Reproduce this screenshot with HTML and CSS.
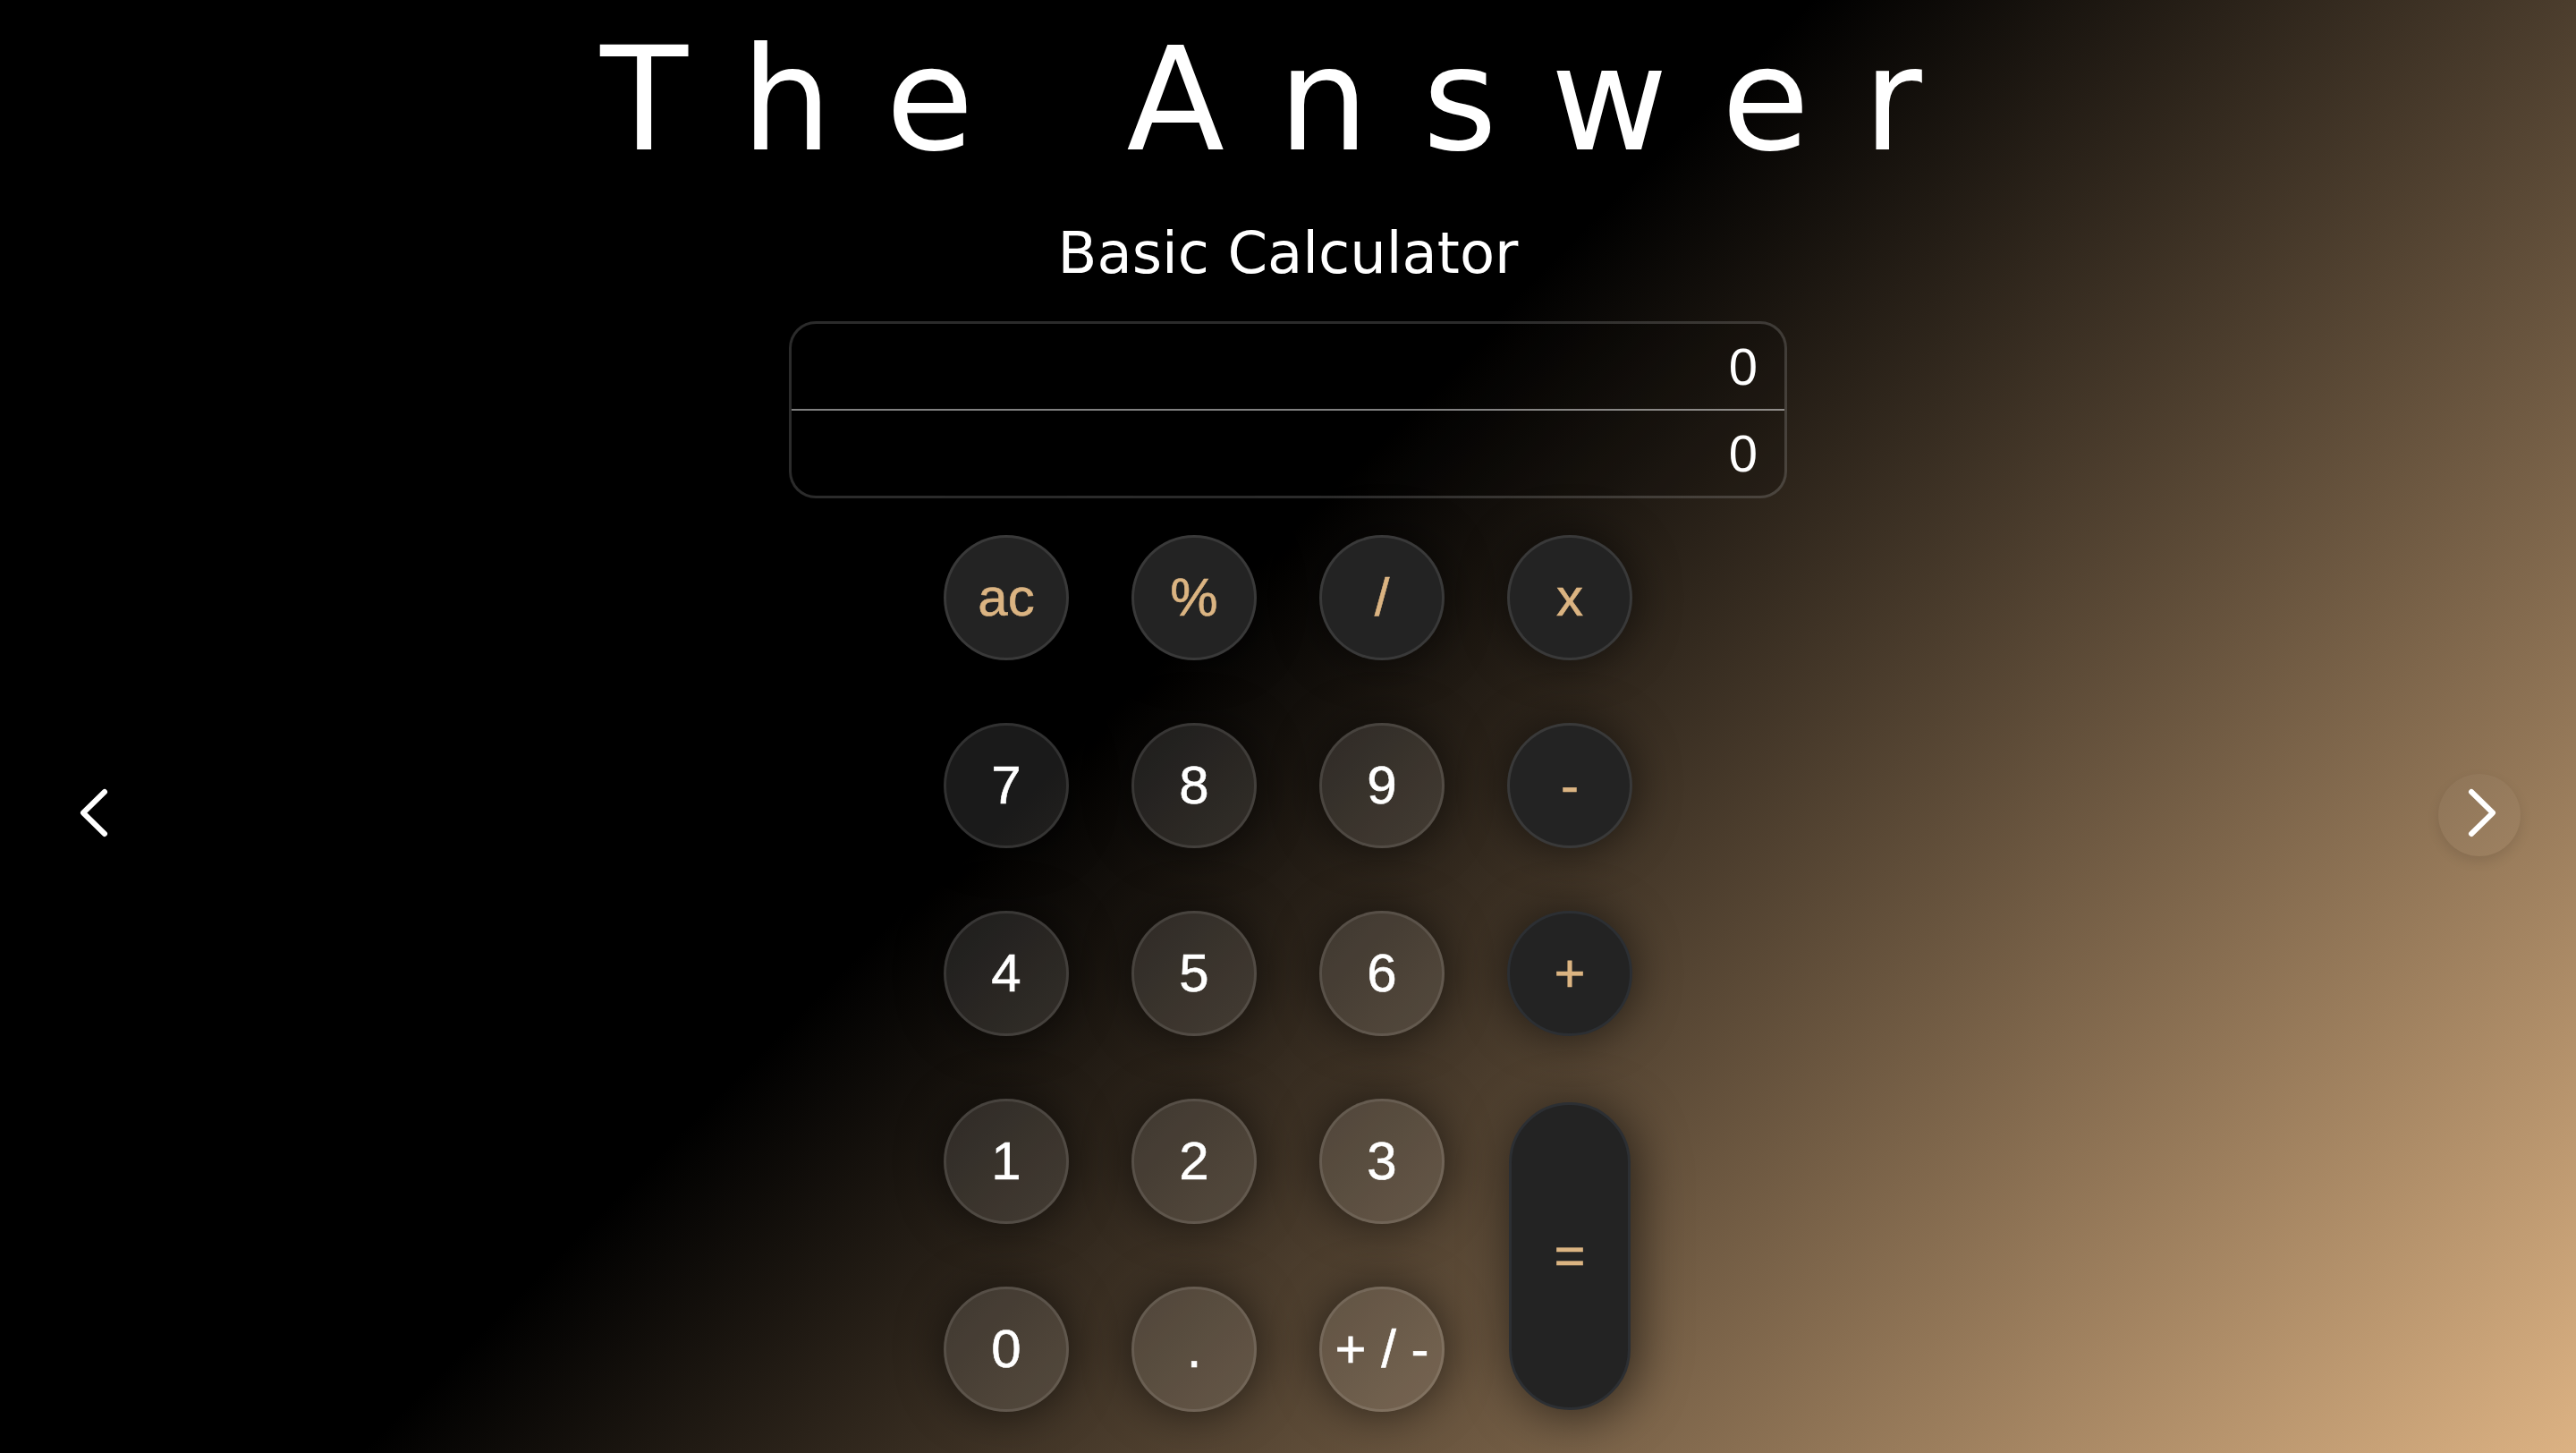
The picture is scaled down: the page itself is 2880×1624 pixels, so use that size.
FILE: index.html
```html
<!DOCTYPE html>
<html lang="en">
<head>
<meta charset="utf-8">
<title>The Answer</title>
<link rel="stylesheet" href="styles.css">
</head>
<body>
<main class="page">
  <h1 class="title">The Answer</h1>
  <h2 class="subtitle">Basic Calculator</h2>
  <section class="calculator">
    <div class="display">
      <div class="display-row">0</div>
      <div class="display-divider"></div>
      <div class="display-row">0</div>
    </div>
    <div class="keys">
      <button class="key op">ac</button>
      <button class="key op">%</button>
      <button class="key op">/</button>
      <button class="key op">x</button>
      <button class="key num">7</button>
      <button class="key num">8</button>
      <button class="key num">9</button>
      <button class="key op">-</button>
      <button class="key num">4</button>
      <button class="key num">5</button>
      <button class="key num">6</button>
      <button class="key op plus">+</button>
      <button class="key num">1</button>
      <button class="key num">2</button>
      <button class="key num">3</button>
      <button class="key op equals">=</button>
      <button class="key num">0</button>
      <button class="key num">.</button>
      <button class="key num">+ / -</button>
    </div>
  </section>
  <button class="nav nav-prev" aria-label="Previous">
    <svg viewBox="0 0 92 92" width="92" height="92"><path d="M55 20 L31 43.5 L55 67" /></svg>
  </button>
  <button class="nav nav-next" aria-label="Next">
    <svg viewBox="0 0 92 92" width="92" height="92"><path d="M37 20 L61 43.5 L37 67" /></svg>
  </button>
</main>
</body>
</html>
```

FILE: styles.css
```css
html, body {
  margin: 0;
  padding: 0;
}

.page {
  position: relative;
  min-height: 100vh;
  display: flex;
  flex-direction: column;
  align-items: center;
  background: linear-gradient(135deg, #000 45%, #dcb283 100%);
  font-family: "DejaVu Sans", sans-serif;
  color: #fff;
  overflow: hidden;
}

.title {
  margin: 18px 0 0;
  font-size: 160px;
  font-weight: normal;
  letter-spacing: 60px;
  line-height: normal;
  white-space: nowrap;
}

.subtitle {
  margin: 41px 0 0;
  font-size: 64px;
  font-weight: normal;
  line-height: normal;
}

.calculator {
  margin-top: 39px;
  display: flex;
  flex-direction: column;
  align-items: center;
}

.display {
  box-sizing: border-box;
  width: 1116px;
  border: 3px solid rgba(255, 255, 255, 0.17);
  border-radius: 30px;
  background: rgba(0, 0, 0, 0.15);
  display: flex;
  flex-direction: column;
}

.display-row {
  height: 95px;
  display: flex;
  align-items: center;
  justify-content: flex-end;
  padding: 0 30px;
  font-family: "Liberation Sans", Arial, sans-serif;
  font-size: 58px;
}

.display-divider {
  height: 2px;
  background: rgba(255, 255, 255, 0.5);
}

.keys {
  margin-top: 41px;
  display: grid;
  grid-template-columns: repeat(4, 140px);
  grid-auto-rows: 140px;
  gap: 70px;
}

.key {
  box-sizing: border-box;
  width: 140px;
  height: 140px;
  padding: 0;
  border-radius: 50%;
  border: 3px solid rgba(255, 255, 255, 0.1);
  font-family: "Liberation Sans", Arial, sans-serif;
  font-size: 60px;
  line-height: 1;
  -webkit-text-stroke: 0.6px currentColor;
  display: flex;
  align-items: center;
  justify-content: center;
  box-shadow: 0 0 50px rgba(0, 0, 0, 0.55);
  cursor: pointer;
}

.num {
  background: rgba(255, 255, 255, 0.1);
  color: #fff;
}

.op {
  background: #232323;
  color: #dbb482;
}

.plus {
  border-color: #2c2f33;
}

.equals {
  grid-column: 4;
  grid-row: 4 / span 2;
  width: 136px;
  height: 344px;
  margin: 4px 2px 0;
  border-radius: 68px;
  border-color: #2c2f33;
  box-shadow: 6px 6px 55px rgba(0, 0, 0, 0.6);
}

.nav {
  position: absolute;
  top: 865px;
  width: 92px;
  height: 92px;
  padding: 0;
  border: none;
  border-radius: 50%;
  background: transparent;
  cursor: pointer;
}

.nav svg {
  display: block;
  fill: none;
  stroke: #fff;
  stroke-width: 6;
  stroke-linecap: round;
  stroke-linejoin: round;
}

.nav-prev {
  left: 62px;
}

.nav-next {
  right: 62px;
  background: rgba(255, 255, 255, 0.03);
  box-shadow: 0 6px 14px rgba(0, 0, 0, 0.1);
}
```
